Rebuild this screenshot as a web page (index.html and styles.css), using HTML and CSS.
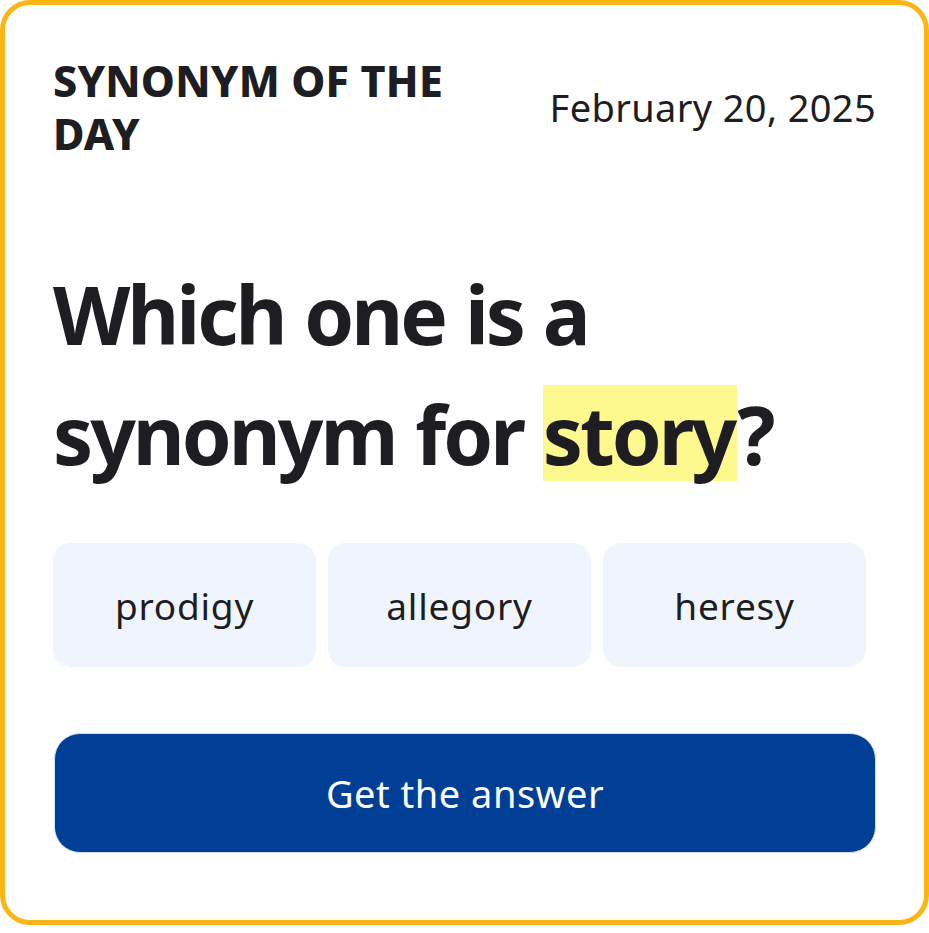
FILE: index.html
```html
<!DOCTYPE html>
<html lang="en">
<head>
<meta charset="utf-8">
<title>Synonym of the Day</title>
<link rel="stylesheet" href="styles.css">
</head>
<body>
<div class="card">
  <div class="header">
    <h2 class="title">SYNONYM OF THE DAY</h2>
    <div class="date">February 20, 2025</div>
  </div>
  <h1 class="question">Which one is a synonym for <span class="hl">story</span>?</h1>
  <div class="options">
    <div class="option">prodigy</div>
    <div class="option">allegory</div>
    <div class="option">heresy</div>
  </div>
  <button class="answer">Get the answer</button>
</div>
</body>
</html>
```
FILE: styles.css
```css
html, body {
  margin: 0;
  padding: 0;
  background: #ffffff;
}
body {
  font-family: "Noto Sans", "Open Sans", sans-serif;
  color: #1d1d22;
}
.card {
  box-sizing: border-box;
  width: 929px;
  height: 925px;
  border: 5px solid #fbb614;
  border-radius: 30px;
  padding: 49px 48px 0 48px;
  display: flex;
  flex-direction: column;
}
.header {
  display: flex;
  justify-content: space-between;
  align-items: center;
}
.title {
  margin: 0;
  width: 420px;
  font-size: 43px;
  line-height: 53px;
  font-weight: 800;
  letter-spacing: 0.2px;
}
.date {
  font-size: 38px;
  line-height: 53px;
  font-weight: 400;
  letter-spacing: 0.35px;
}
.question {
  margin: 94px 0 0 0;
  font-size: 80px;
  line-height: 120px;
  font-weight: 700;
  letter-spacing: -3px;
  word-spacing: 2px;
  width: 800px;
}
.hl {
  background: linear-gradient(to bottom, transparent 6px, #fdf98f 6px, #fdf98f calc(100% - 7px), transparent calc(100% - 7px));
  padding: 0 3px 0 0;
}
.options {
  margin: 49px 10px 0 0;
  display: grid;
  grid-template-columns: repeat(3, 1fr);
  gap: 12px;
  flex-shrink: 0;
}
.option {
  height: 124px;
  background: #f0f5fd;
  border-radius: 18px;
  display: flex;
  align-items: center;
  justify-content: center;
  font-size: 37px;
  letter-spacing: 0.8px;
}
.answer {
  flex-shrink: 0;
  margin: 66px 0 0 1px;
  height: 120px;
  border: 1px solid #cfe0fb;
  border-radius: 26px;
  background: #003f95;
  color: #ffffff;
  font-family: "Noto Sans", "Open Sans", sans-serif;
  font-size: 38px;
  letter-spacing: 0.5px;
}
```
